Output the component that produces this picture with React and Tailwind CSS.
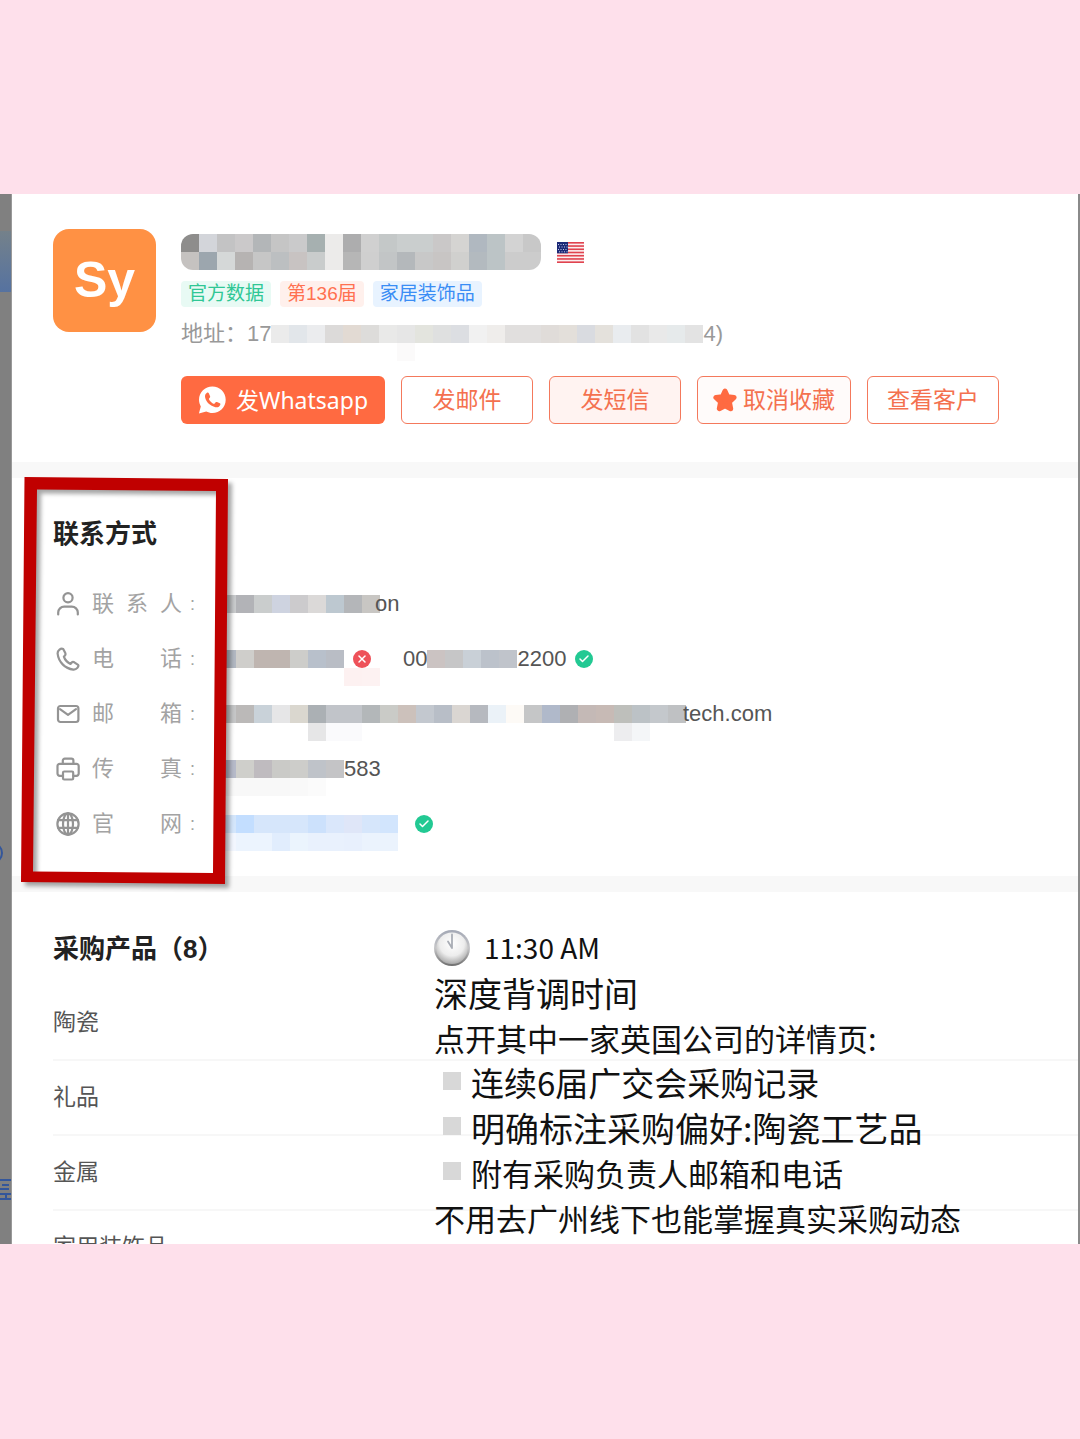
import { Check, X } from 'lucide-react';

const NAME_MASK = [
  ['#8e8d8c', '#d3d5da', '#c3c3c4', '#cbc9ca', '#b3b6b8', '#c5c5c5', '#cacacb', '#a6b0b0', '#ecebea', '#adadae', '#d0d0d0', '#c4c8c8', '#cacece', '#cacece', '#cac8c8', '#d5d4d2', '#b0b8c0', '#bcc4c6', '#d3d3d3', '#c8c8c8'],
  ['#c5c2c0', '#9ca6ae', '#d5d8d8', '#b6b3b2', '#c6c6c6', '#bcbfc1', '#c8c3c2', '#c9cccc', '#ecebea', '#b6b6b6', '#cfcfcf', '#c2c5c6', '#b4b8bb', '#c8c8c8', '#c8c5c4', '#d0d0ce', '#b3babf', '#bcc4c6', '#cccccc', '#cccccc'],
];

const ADDRESS_MASK = [
  ['#ebebeb', '#e2e6ea', '#ebecee', '#dcdad9', '#e2dad3', '#dddcda', '#e9e9e8', '#e6e6e6', '#e3e4de', '#dfe0e0', '#dcdee2', '#f1f1f1', '#efedeb', '#e1dfde', '#e1dfde', '#e0dcd9', '#e3dfda', '#d9dbe0', '#e4e1dc', '#e9ecef', '#e2e2e2', '#e9e9e9', '#e6eaeb', '#e3e3e3'],
  [null, null, null, null, null, null, null, '#fbfafa'],
];

const PERSON_MASK = [
  ['#c9cbcd', '#b2b3b7', '#cacdcd', '#ced3e0', '#cccbcd', '#dbd9d8', '#bdc8d0', '#b4b6b9', '#c8c6c3'],
];

const PHONE_MASK = [
  ['#b2b8c2', '#cfcecb', '#bfb5b0', '#bfb5b0', '#cdcdca', '#b8c0cb', '#b9bdc5'],
  [null, null, null, null, null, null, null, '#fdf1f1', '#fdf2f2'],
];

const PHONE2_MASK = [['#cbc3c2', '#c6c6c7', '#c9d0d7', '#bcc2cb', '#c0c4cb']];

const MAIL_MASK = [
  ['#c5c6c7', '#bbb9b8', '#c9d2d9', '#e6e6e7', '#dad7cf', '#abb0b4', '#c1c4c9', '#c1c4c9', '#b3b7b9', '#cacbc7', '#ccc1bb', '#c3c8cf', '#b8bec7', '#dad6d2', '#b6b9bf', '#ebf2f8', '#fdfaf6', '#c5c6c7', '#b0b9ca', '#afb0b3', '#c4b9b6', '#c7bab5', '#bebfbb', '#bcc2c6', '#c4c8cc', '#bfc1c3'],
  [null, null, null, null, null, '#e6e6e7', '#fafafc', '#fafafc', null, null, null, null, null, null, null, null, null, null, null, null, null, null, '#ededef', '#f4f6f8'],
];

const FAX_MASK = [
  ['#b6bac9', '#cfcfcb', '#bfbbbf', '#cacac7', '#cdcdca', '#bfc3c9', '#c4c4c6'],
  ['#f8f8f8', '#f8f8f8', '#f8f8f8', '#f8f8f8', '#f9f9f9', '#fbfbfb'],
];

const SITE_MASK = [
  ['#d4e6fb', '#c3deff', '#d6e6fb', '#d6e6fb', '#d6e6fb', '#cce1fc', '#dae7fb', '#dfe6f8', '#d6e6fb', '#d2e5fd'],
  ['#f2f6fe', '#ecf4fe', '#ecf4fe', '#e1edfd', '#ebf4fd', '#e9f1fd', '#e9f1fd', '#e8f0fd', '#ebf3fd', '#ebf3fd'],
];

const PRODUCTS = ['陶瓷', '礼品', '金属'];

function Mosaic({ rows, width, height = 18, className = '' }) {
  return (
    <svg
      width={width}
      height={height}
      className={`shrink-0 overflow-visible ${className}`}
      shapeRendering="crispEdges"
      aria-hidden="true"
    >
      {rows.map((row, y) =>
        row.map((color, x) =>
          color ? <rect key={`${x}-${y}`} x={x * 18} y={y * 18} width="18" height="18" fill={color} /> : null
        )
      )}
    </svg>
  );
}

function LineIcon({ children }) {
  return (
    <svg
      className="size-6 shrink-0 text-[#949494]"
      viewBox="0 0 24 24"
      fill="none"
      stroke="currentColor"
      strokeWidth="2.2"
      strokeLinecap="round"
      strokeLinejoin="round"
      aria-hidden="true"
    >
      {children}
    </svg>
  );
}

function UserIcon() {
  return (
    <LineIcon>
      <circle cx="12" cy="5.8" r="4.6" />
      <path d="M2.2 22.4v-1.8a6 6 0 0 1 6-6h7.6a6 6 0 0 1 6 6v1.8" />
    </LineIcon>
  );
}

function PhoneIcon() {
  return (
    <LineIcon>
      <path d="M7.2 2C4.800 .9 1.600 3.200 1.600 6.500 2.500 15 9 21.600 17.300 22.600c3.400.3 5.900-3.300 4.800-4.800l-3.800-2.500c-1-.6-2-.4-2.800.5l-1 1.100C11.200 15.400 8.800 12.600 7.900 9.700l1-1.100c.7-.8.8-1.600.4-2.500z" />
    </LineIcon>
  );
}

function MailIcon() {
  return (
    <LineIcon>
      <rect x="2" y="4" width="20.4" height="16" rx="2.4" />
      <path d="M4 7.200 12 12.800l8-5.600" />
    </LineIcon>
  );
}

function PrinterIcon() {
  return (
    <LineIcon>
      <path d="M6.800 6.800V3.600a2 2 0 0 1 2-2h6.600a2 2 0 0 1 2 2v3.200" />
      <path d="M7 18.800H3.700a2.200 2.200 0 0 1-2.200-2.200V9a2.200 2.200 0 0 1 2.200-2.200h16.800A2.200 2.200 0 0 1 22.700 9v7.600a2.200 2.200 0 0 1-2.200 2.200h-3.300" />
      <rect x="7" y="14.5" width="10.2" height="8" rx="1.2" />
    </LineIcon>
  );
}

function GlobeIcon() {
  return (
    <LineIcon>
      <circle cx="12" cy="12" r="10.6" />
      <ellipse cx="12" cy="12" rx="5" ry="10.6" />
      <path d="M2 8.200h20M2 15.800h20M12 1.400v21.200" />
    </LineIcon>
  );
}

function WhatsappIcon() {
  return (
    <svg className="size-7 shrink-0" viewBox="0 0 28 28" aria-hidden="true">
      <path
        fill="#fff"
        d="M14.400.6C7 .6 1 6.400 1 13.800c0 2.500.7 4.700 1.800 6.600L.9 27.400l7.300-1.800c1.800.9 4 1.500 6.200 1.500 7.400 0 13.300-6 13.300-13.300S21.800.6 14.400.6z"
      />
      <path
        fill="#ff6a41"
        d="M9 6.800c.8-.4 1.400-.3 1.800.5l1.300 2.900c.2.500.1.900-.2 1.300l-1.100 1.400c1.200 2.400 3 4 5.300 5l1.600-1.600c.4-.4.8-.5 1.300-.3l2.800 1.300c.6.300.7.800.5 1.400-.7 2-2.700 3-4.900 2.500-5.200-1.200-9-4.800-10.200-9.400C6.700 9.700 7.200 7.800 9 6.800z"
      />
    </svg>
  );
}

function StarIcon() {
  return (
    <svg className="size-6 shrink-0" viewBox="0 0 24 24" aria-hidden="true">
      <path
        fill="#ff6a41"
        stroke="#ff6a41"
        strokeWidth="5"
        strokeLinejoin="round"
        d="m12 3 2.600 5.700 6.500.8-4.700 4.500 1.300 6.700L12 17.700l-5.700 3L7.600 14 2.900 9.500l6.500-.8z"
      />
    </svg>
  );
}

function UsFlag() {
  return (
    <svg className="h-[21px] w-[27px] shrink-0" viewBox="0 0 27 21" role="img" aria-label="US">
      <rect width="27" height="21" fill="#fbeff0" />
      {[0, 1, 2, 3, 4, 5, 6].map((i) => (
        <rect key={i} y={i * 3.23} width="27" height="1.62" fill="#e0434f" />
      ))}
      <rect width="11" height="11.3" fill="#1c2a78" />
      <path stroke="#c4cae6" strokeWidth="1" strokeDasharray="1 1.5" d="M1 2.500h9M2 5h9M1 7.500h9M2 9.800h9" />
    </svg>
  );
}

function ClockIcon() {
  return (
    <svg className="size-9 shrink-0" viewBox="0 0 36 36" aria-hidden="true">
      <defs>
        <linearGradient id="rim" x1="0" y1="0" x2="0" y2="1">
          <stop offset="0" stopColor="#a3a8b5" />
          <stop offset="0.5" stopColor="#c6c6c8" />
          <stop offset="1" stopColor="#6e6e6e" />
        </linearGradient>
        <radialGradient id="face" cx="0.5" cy="0.35" r="0.65">
          <stop offset="0" stopColor="#fff" />
          <stop offset="0.6" stopColor="#ededed" />
          <stop offset="1" stopColor="#a8a8a8" />
        </radialGradient>
      </defs>
      <circle cx="18" cy="18" r="18" fill="url(#rim)" />
      <circle cx="18" cy="18.3" r="15.8" fill="url(#face)" />
      <path d="M18 18V4.500M18 18l-4-6.500" stroke="#a9adb5" strokeWidth="1.8" strokeLinecap="round" />
    </svg>
  );
}

function Verified() {
  return (
    <span className="flex size-[18px] shrink-0 items-center justify-center rounded-full bg-[#22c993] text-white">
      <Check className="size-3" strokeWidth={3} />
    </span>
  );
}

function Invalid() {
  return (
    <span className="relative flex size-[18px] shrink-0 items-center justify-center rounded-full bg-[#ee5159] text-white">
      <X className="size-3" strokeWidth={3} />
    </span>
  );
}

function Tag({ className, children }) {
  return <span className={`rounded-sm px-[7px] text-[19px] leading-[26px] ${className}`}>{children}</span>;
}

function ActionButton({ className = 'bg-white', children }) {
  return (
    <button
      type="button"
      className={`flex h-12 min-w-[132px] items-center justify-center gap-[6px] rounded-md border border-[#f4795c] px-[15px] text-[23px] text-[#f4714f] ${className}`}
    >
      {children}
    </button>
  );
}

function ContactRow({ icon: Icon, label, children }) {
  return (
    <div className="flex h-[55px] items-center">
      <dt className="flex w-[162px] shrink-0 items-center pl-[3px] text-[22px] text-[#a3a3a3]">
        <Icon />
        <span className="ml-3 flex w-[90px] justify-between">
          {label.split('').map((char) => (
            <span key={char}>{char}</span>
          ))}
        </span>
        <span className="ml-2 text-lg">:</span>
      </dt>
      <dd className="ml-[3px] flex items-center text-[22px] text-[#555]">{children}</dd>
    </div>
  );
}

// Hand-drawn frame around the contact labels, slightly off square
function RedFrame() {
  return (
    <svg
      className="pointer-events-none absolute -top-[6px] left-[4px] z-10 overflow-visible drop-shadow-[4px_4px_2px_rgba(0,0,0,0.35)]"
      width="216"
      height="418"
      aria-hidden="true"
    >
      <path
        fill="#c00000"
        fillRule="evenodd"
        d="M8.500 5 212 7l-3 405-204-2zM21 17.500 17 399.500l180 1.500 3-382z"
      />
    </svg>
  );
}

function BackdropStrip() {
  return (
    <div className="relative w-3 shrink-0 overflow-hidden border-r border-[#999] bg-[#808080]">
      <div className="absolute inset-x-0 top-[37px] h-[61px] bg-linear-to-b from-[#74818a] to-[#5672a0]" />
      <svg className="absolute top-[648px] left-0" width="12" height="22" fill="none" stroke="#33569b" strokeWidth="2" aria-hidden="true">
        <path d="M-8 1a10 10 0 0 1 0 20" />
      </svg>
      <svg className="absolute top-[984px] left-0" width="12" height="24" stroke="#33569b" strokeWidth="2" aria-hidden="true">
        <path d="M0 2h12M2 7h7M0 11h9M0 16h12M6 16v5M0 21h12" />
      </svg>
    </div>
  );
}

function Note({ children }) {
  return (
    <li className="flex items-start gap-[10px]">
      <span className="mt-3 size-[18px] shrink-0 bg-[#d8d8d8]" />
      {children}
    </li>
  );
}

function Annotation() {
  return (
    <div className="absolute top-[33px] left-[422px] font-['Noto_Sans_CJK_SC',sans-serif] text-[31px] leading-[45px] whitespace-nowrap text-[#111]">
      <p className="flex items-center gap-[14px] text-[28px] leading-[45px]">
        <ClockIcon />
        11:30 AM
      </p>
      <p className="text-[34px] leading-[45px]">深度背调时间</p>
      <p>点开其中一家英国公司的详情页:</p>
      <ul className="pl-[9px]">
        <Note>
          <span className="text-[33px]">连续6届广交会采购记录</span>
        </Note>
        <Note>
          <span className="text-[34px]">明确标注采购偏好:陶瓷工艺品</span>
        </Note>
        <Note>
          <span>附有采购负责人邮箱和电话</span>
        </Note>
      </ul>
      <p>不用去广州线下也能掌握真实采购动态</p>
    </div>
  );
}

export default function App() {
  return (
    <div className="min-h-screen bg-[#fee0eb] py-[194px] font-['Liberation_Sans','Noto_Sans_CJK_SC',sans-serif]">
      <div className="flex">
        <BackdropStrip />

        <main className="min-w-0 flex-1 border-r-2 border-[#8a8a8a] bg-white">
          <header className="flex gap-[25px] pt-[35px] pr-6 pb-[38px] pl-[41px]">
            <div className="flex size-[103px] shrink-0 items-center justify-center rounded-2xl bg-[#ff9144] text-[50px] font-bold text-white">
              Sy
            </div>
            <div className="min-w-0 pt-[5px]">
              <div className="flex items-center gap-4">
                <div className="overflow-hidden rounded-xl">
                  <Mosaic rows={NAME_MASK} width={360} height={36} className="block" />
                </div>
                <UsFlag />
              </div>
              <div className="mt-[11px] flex gap-[9px]">
                <Tag className="bg-[#e8faf4] text-[#2fc795]">官方数据</Tag>
                <Tag className="bg-[#fff0ec] text-[#ff7150]">第136届</Tag>
                <Tag className="bg-[#e8f3ff] text-[#3a8df5]">家居装饰品</Tag>
              </div>
              <div className="mt-[11px] flex items-center text-[22px] leading-[32px] text-[#999]">
                <span>地址：17</span>
                <Mosaic rows={ADDRESS_MASK} width={432} />
                <span>4)</span>
              </div>
              <div className="mt-[26px] flex gap-4">
                <button
                  type="button"
                  className="flex h-12 items-center gap-[10px] rounded-md bg-[#ff6a41] px-[17px] font-['Noto_Sans','Noto_Sans_CJK_SC',sans-serif] text-[23px] text-white"
                >
                  <WhatsappIcon />
                  发Whatsapp
                </button>
                <ActionButton>发邮件</ActionButton>
                <ActionButton className="bg-[#fff3f1]">发短信</ActionButton>
                <ActionButton className="bg-[#fffbfa]">
                  <StarIcon />
                  取消收藏
                </ActionButton>
                <ActionButton>查看客户</ActionButton>
              </div>
            </div>
          </header>

          <section className="relative border-t-16 border-[#f8f8f8] pt-[36px] pr-6 pb-[25px] pl-[41px]">
            <h2 className="text-[26px] leading-[40px] font-bold text-[#222]">联系方式</h2>
            <dl className="mt-[22px]">
              <ContactRow icon={UserIcon} label="联系人">
                <Mosaic rows={PERSON_MASK} width={157} />
                <span>on</span>
              </ContactRow>
              <ContactRow icon={PhoneIcon} label="电话">
                <Mosaic rows={PHONE_MASK} width={135} />
                <Invalid />
                <span className="ml-8">00</span>
                <Mosaic rows={PHONE2_MASK} width={90} />
                <span className="mr-[9px]">2200</span>
                <Verified />
              </ContactRow>
              <ContactRow icon={MailIcon} label="邮箱">
                <Mosaic rows={MAIL_MASK} width={465} />
                <span>tech.com</span>
              </ContactRow>
              <ContactRow icon={PrinterIcon} label="传真">
                <Mosaic rows={FAX_MASK} width={126} />
                <span>583</span>
              </ContactRow>
              <ContactRow icon={GlobeIcon} label="官网">
                <Mosaic rows={SITE_MASK} width={197} />
                <Verified />
              </ContactRow>
            </dl>
            <RedFrame />
          </section>

          <section className="relative border-t-16 border-[#f8f8f8] pt-[37px] pl-[41px]">
            <h2 className="text-[26px] leading-[40px] font-bold text-[#222]">采购产品（8）</h2>
            <ul className="mt-[17px] text-[23px] text-[#555]">
              {PRODUCTS.map((product) => (
                <li key={product} className="flex h-[75px] items-center border-b-2 border-[#f7f7f7]">
                  {product}
                </li>
              ))}
              <li className="h-[33px] overflow-hidden leading-[72px]">家用装饰品</li>
            </ul>
            <Annotation />
          </section>
        </main>
      </div>
    </div>
  );
}
